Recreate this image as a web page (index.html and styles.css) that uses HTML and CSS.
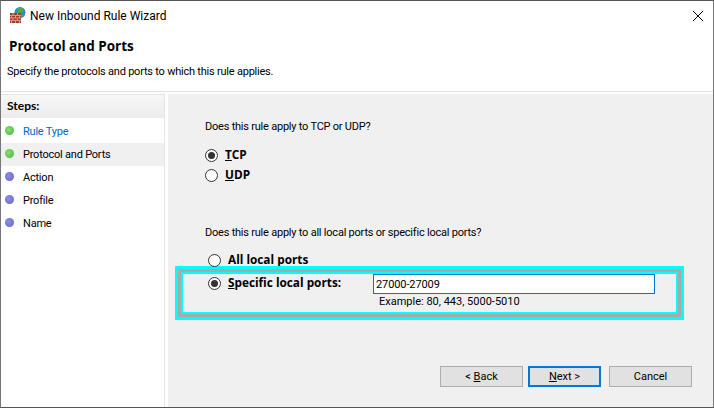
FILE: index.html
```html
<!DOCTYPE html>
<html lang="en">
<head>
    <meta charset="UTF-8">
    <title>New Inbound Rule Wizard</title>
    <link rel="stylesheet" href="styles.css">
</head>
<body>
    <div class="window">
        <!-- Title bar -->
        <div class="titlebar">
            <svg class="app-icon" width="18" height="18" viewBox="0 0 18 18">
                <circle cx="11" cy="6.500" r="5.500" fill="#2f86d8"/>
                <path d="M8 3c2-2 5-2 6 0 1 2-1 3-2 4-1 1-3 0-3-1S7 4 8 3z" fill="#4cae3c"/>
                <path d="M13 9c1-1 2-1 3-1-1 2-2 3-4 3.500z" fill="#4cae3c"/>
                <rect x="1" y="7" width="11" height="10" fill="#9c3f2a"/>
                <path d="M1 9.500h11M1 12h11M1 14.500h11M4 7v2.500M8.500 7v2.500M2.500 9.500V12M6.500 9.500V12M10.500 9.500V12M4 12v2.500M8.500 12v2.500M2.500 14.500V17M6.500 14.500V17M10.500 14.500V17" stroke="#d99a83" stroke-width="1" fill="none"/>
            </svg>
            <span class="title-text">New Inbound Rule Wizard</span>
            <svg class="close-icon" width="10" height="10" viewBox="0 0 10 10">
                <path d="M0 0l10 10M10 0L0 10" stroke="#000" stroke-width="1" fill="none"/>
            </svg>
        </div>

        <!-- Header -->
        <div class="header">
            <h1>Protocol and Ports</h1>
            <p>Specify the protocols and ports to which this rule applies.</p>
        </div>

        <div class="main">
            <!-- Steps -->
            <div class="sidebar">
                <div class="steps-title">Steps:</div>
                <ul class="steps">
                    <li class="step done link"><span class="dot"></span>Rule Type</li>
                    <li class="step done current"><span class="dot"></span>Protocol and Ports</li>
                    <li class="step"><span class="dot"></span>Action</li>
                    <li class="step"><span class="dot"></span>Profile</li>
                    <li class="step"><span class="dot"></span>Name</li>
                </ul>
            </div>

            <!-- Page content -->
            <div class="content">
                <p class="question">Does this rule apply to TCP or UDP?</p>
                <div class="radio-group">
                    <div class="radio-row"><span class="radio checked"></span><span class="radio-label"><u>T</u>CP</span></div>
                    <div class="radio-row"><span class="radio"></span><span class="radio-label"><u>U</u>DP</span></div>
                </div>

                <p class="question second">Does this rule apply to all local ports or specific local ports?</p>
                <div class="radio-row ports-all"><span class="radio"></span><span class="radio-label">All local ports</span></div>

                <div class="highlight">
                    <div class="highlight-inner">
                        <div class="highlight-fill">
                            <div class="ports-row">
                                <span class="radio checked"></span>
                                <span class="radio-label"><u>S</u>pecific local ports:</span>
                                <input class="ports-input" type="text" value="27000-27009">
                            </div>
                            <div class="example">Example: 80, 443, 5000-5010</div>
                        </div>
                    </div>
                </div>

                <div class="buttons">
                    <button class="btn">&lt; <u>B</u>ack</button>
                    <button class="btn primary"><u>N</u>ext &gt;</button>
                    <button class="btn cancel">Cancel</button>
                </div>
            </div>
        </div>
    </div>
</body>
</html>
```

FILE: styles.css
```css
* {
    margin: 0;
    padding: 0;
    box-sizing: border-box;
}

html, body {
    width: 714px;
    height: 408px;
    overflow: hidden;
}

body {
    font-family: Roboto, Lato, sans-serif;
    font-size: 11px;
    letter-spacing: -0.22px;
    color: #000;
    background: #fff;
}

.window {
    width: 714px;
    height: 408px;
    display: flex;
    flex-direction: column;
    border-top: 1px solid #555;
    border-left: 1px solid #777;
    border-right: 1px solid #777;
    border-bottom: 1px solid #555;
    background: #fff;
}

.titlebar {
    height: 30px;
    flex: none;
    display: flex;
    align-items: center;
    padding-left: 8px;
    padding-right: 10px;
}

.app-icon {
    margin-right: 3px;
    margin-top: -2px;
}

.title-text {
    flex: 1;
    margin-top: -1px;
    font-size: 12px;
    letter-spacing: 0;
}

.close-icon {
    margin-top: -1px;
}

.header {
    height: 61px;
    flex: none;
    border-bottom: 1px solid #e3e3e3;
    padding-left: 8px;
}

.header h1 {
    font-family: "Open Sans", sans-serif;
    font-size: 13.5px;
    letter-spacing: 0;
    font-weight: 700;
    line-height: 18px;
    padding-top: 6px;
}

.header p {
    line-height: 17px;
    padding-top: 8px;
    margin-left: -2px;
}

.main {
    flex: 1;
    display: flex;
    min-height: 0;
    padding-top: 2px;
}

.sidebar {
    width: 164px;
    flex: none;
    border-right: 1px solid #e3e3e3;
    border-top: 1px solid #e3e3e3;
    margin-right: 3px;
}

.steps-title {
    height: 23px;
    line-height: 21px;
    padding-left: 6px;
    font-family: Lato, sans-serif;
    font-size: 12px;
    letter-spacing: 0;
    font-weight: 700;
    background: linear-gradient(#f7f7f7, #ececec);
}

.steps {
    list-style: none;
    padding-top: 2px;
}

.step {
    height: 23px;
    line-height: 22px;
    display: flex;
    align-items: center;
    padding-left: 4px;
}

.step.current {
    background: #f0f0f0;
}

.step.link {
    color: #0066cc;
}

.dot {
    width: 9px;
    height: 9px;
    border-radius: 50%;
    margin-right: 9px;
    margin-top: -2px;
    background: radial-gradient(circle at 40% 40%, #8f8fe8, #5f5fc4);
}

.step.done .dot {
    background: radial-gradient(circle at 40% 40%, #8ae070, #3fb23f);
}

.content {
    flex: 1;
    background: #f0f0f0;
    display: flex;
    flex-direction: column;
    padding-top: 24px;
    min-width: 0;
}

.question {
    line-height: 17px;
    padding-left: 37px;
}

.radio-group {
    padding-left: 37px;
    padding-top: 10px;
}

.radio-row {
    display: flex;
    align-items: center;
    height: 20px;
}

.radio {
    width: 13px;
    height: 13px;
    flex: none;
    border: 1px solid #333;
    border-radius: 50%;
    background: #fff;
    margin-right: 7px;
    position: relative;
}

.radio.checked::after {
    content: '';
    position: absolute;
    left: 2px;
    top: 2px;
    width: 7px;
    height: 7px;
    border-radius: 50%;
    background: #333;
}

.radio-label {
    font-family: "Open Sans", sans-serif;
    font-size: 11.8px;
    letter-spacing: 0;
    font-weight: 700;
    margin-top: -3px;
}

.question.second {
    padding-top: 39px;
}

.ports-all {
    padding-left: 40px;
    padding-top: 3px;
    margin-top: 8px;
}

.highlight {
    margin-left: 7px;
    margin-top: -3px;
    width: 509px;
    height: 54px;
    background: #00ffff;
    padding: 3px;
}

.highlight-inner {
    height: 100%;
    background: #a9a9a9;
    padding: 3px;
}

.highlight-fill {
    height: 100%;
    background: #00ffff;
    padding: 2px;
}

.ports-row {
    height: 20px;
    display: flex;
    align-items: center;
    padding-left: 25px;
    background: #f0f0f0;
    width: 100%;
}

.ports-row .radio-label {
    width: 145px;
    flex: none;
    margin-top: -5px;
}

.ports-row .radio {
    margin-top: -2px;
}

.ports-input {
    width: 282px;
    height: 20px;
    border: 1px solid #0078d7;
    background: #fff;
    font-family: inherit;
    font-size: 11px;
    letter-spacing: -0.1px;
    padding-left: 2px;
    outline: none;
}

.example {
    height: 18px;
    line-height: 15px;
    letter-spacing: 0;
    background: #f0f0f0;
    padding-left: 196px;
}

.buttons {
    margin-top: auto;
    display: flex;
    justify-content: flex-end;
    padding-right: 21px;
    padding-bottom: 20px;
}

.btn {
    width: 83px;
    height: 21px;
    border: 1px solid #adadad;
    background: #e1e1e1;
    font-family: inherit;
    font-size: 11px;
    color: #000;
}

.btn.primary {
    width: 73px;
    border: 2px solid #0078d7;
    margin-left: 5px;
    margin-right: 8px;
}
```
